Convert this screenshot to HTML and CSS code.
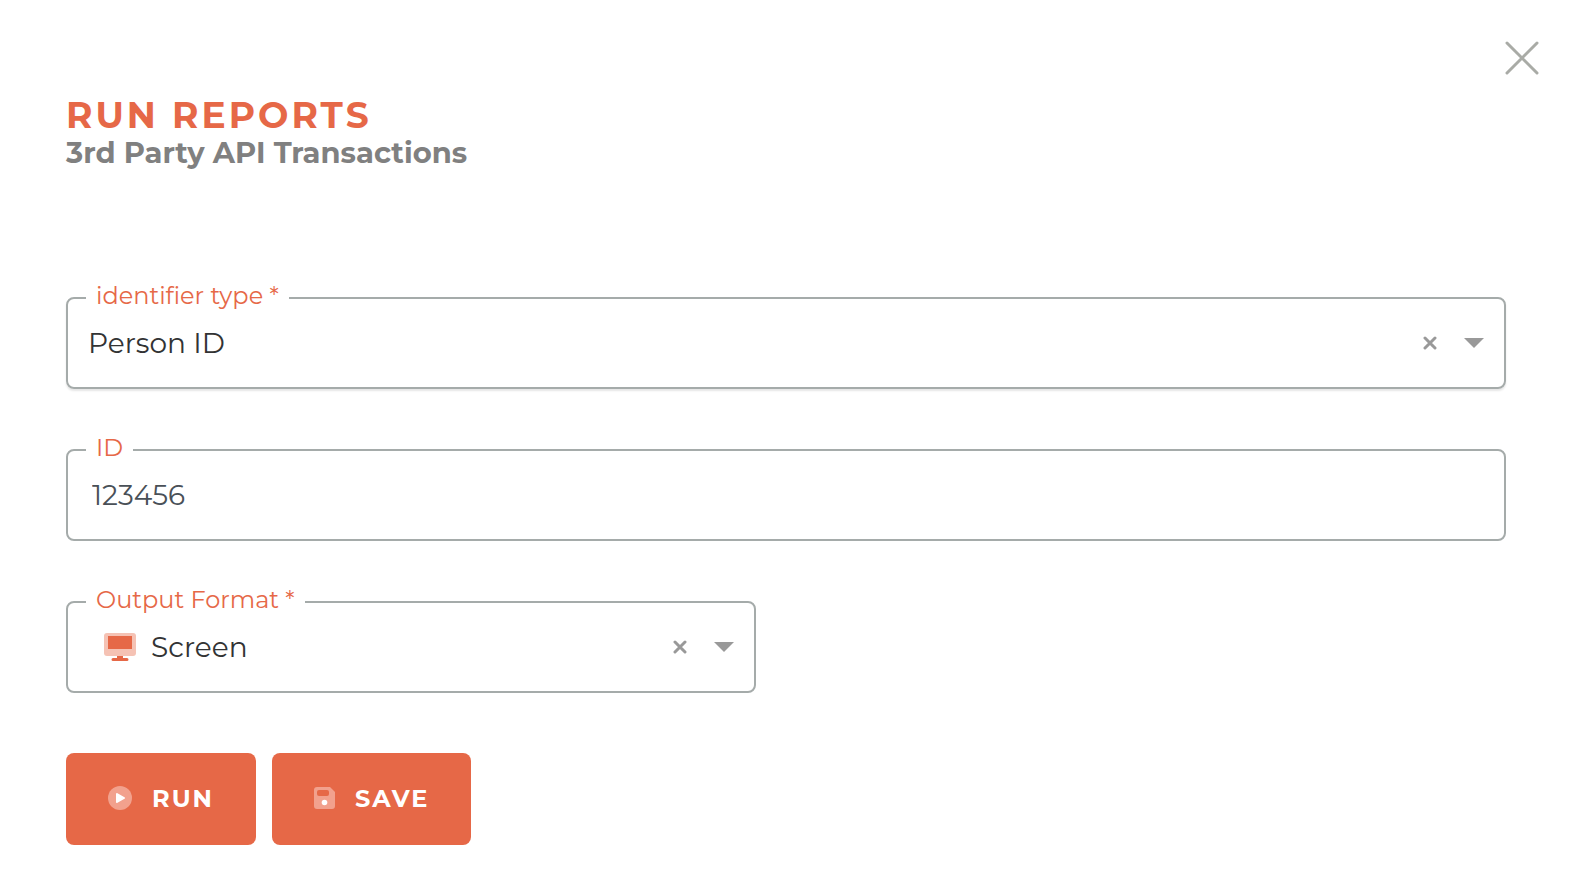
FILE: index.html
```html
<!DOCTYPE html>
<html lang="en">
<head>
  <meta charset="UTF-8" />
  <meta name="viewport" content="width=device-width, initial-scale=1" />
  <title>Run Reports - 3rd Party API Transactions</title>
  <link rel="stylesheet" href="styles.css">
</head>
<body>

  <div class="top-bar">
    <button type="button" class="close-btn" aria-label="Close">
      <svg width="36" height="36" viewBox="0 0 36 36"><path d="M3 3L33 33M33 3L3 33" /></svg>
    </button>
  </div>

  <main class="container">
    <header class="page-header">
      <h1>RUN REPORTS</h1>
      <h2>3rd Party API Transactions</h2>
    </header>

    <form id="reportForm">
      <div class="field field-raised">
        <label for="identifierType">identifier type *</label>
        <select id="identifierType" required>
          <option value="person" selected>Person ID</option>
        </select>
        <div class="field-tools">
          <button type="button" class="clear-btn" aria-label="Clear identifier type">
            <svg width="14" height="14" viewBox="0 0 14 14"><path d="M2 2L12 12M12 2L2 12" /></svg>
          </button>
          <svg class="arrow" width="20" height="10" viewBox="0 0 20 10"><path d="M0 0H20L10 10Z" /></svg>
        </div>
      </div>

      <div class="field">
        <label for="personId">ID</label>
        <input type="text" id="personId" value="123456">
      </div>

      <div class="field field-half">
        <label for="outputFormat">Output Format *</label>
        <svg class="screen-icon" width="32" height="30" viewBox="0 0 32 30">
          <rect x="0" y="1" width="32" height="23" rx="3" fill="#f5c2b4" />
          <rect x="4" y="4" width="24" height="13" fill="#e66847" />
          <path d="M13 24H19V26H23A1.500 1.500 0 0 1 23 29H9A1.500 1.500 0 0 1 9 26H13Z" fill="#e66847" />
        </svg>
        <select id="outputFormat" class="with-icon" required>
          <option value="screen" selected>Screen</option>
        </select>
        <div class="field-tools">
          <button type="button" class="clear-btn" aria-label="Clear output format">
            <svg width="14" height="14" viewBox="0 0 14 14"><path d="M2 2L12 12M12 2L2 12" /></svg>
          </button>
          <svg class="arrow" width="20" height="10" viewBox="0 0 20 10"><path d="M0 0H20L10 10Z" /></svg>
        </div>
      </div>

      <div class="actions">
        <button type="submit" class="btn">
          <svg width="24" height="24" viewBox="0 0 24 24">
            <circle cx="12" cy="12" r="12" fill="#f2a18d" />
            <path d="M9 8L16 12L9 16Z" fill="#fff" stroke="#fff" stroke-width="2" stroke-linejoin="round" />
          </svg>
          <span>RUN</span>
        </button>
        <button type="button" class="btn">
          <svg width="21" height="22" viewBox="0 0 21 22">
            <path d="M3 0H16L21 5V19A3 3 0 0 1 18 22H3A3 3 0 0 1 0 19V3A3 3 0 0 1 3 0Z" fill="#f2a18d" />
            <rect x="3" y="3" width="12" height="6" rx="2" fill="#e66847" />
            <circle cx="10.500" cy="15.500" r="2.800" fill="#fff" />
          </svg>
          <span>SAVE</span>
        </button>
      </div>
    </form>
  </main>

</body>
</html>
```
FILE: styles.css
```css
* {
  box-sizing: border-box;
}

body {
  margin: 0;
  background: #fff;
  font-family: Montserrat, Inter, sans-serif;
}

svg {
  display: block;
}

button {
  font-family: inherit;
  border: none;
  cursor: pointer;
}

.top-bar {
  display: flex;
  justify-content: flex-end;
  padding: 40px 42px 0;
}

.close-btn {
  padding: 0;
  background: none;
}

.close-btn path {
  stroke: #a9aba6;
  stroke-width: 3;
  stroke-linecap: round;
}

.container {
  padding: 19px 76px 48px 66px;
}

.page-header {
  margin-bottom: 126px;
}

h1 {
  margin: 0;
  font-size: 36px;
  line-height: 40px;
  letter-spacing: 3px;
  color: #e66847;
}

h2 {
  margin: 0;
  font-size: 29px;
  line-height: 36px;
  color: #808080;
}

form {
  display: flex;
  flex-direction: column;
  gap: 60px;
}

.field {
  position: relative;
  display: flex;
  align-items: center;
  height: 92px;
  border: 2px solid #a5abaa;
  border-radius: 8px;
}

.field-raised {
  box-shadow: 0 2px 2px rgba(0, 0, 0, 0.1);
}

.field-half {
  width: calc(50% - 30px);
}

/* label sits over the top border */
.field label {
  position: absolute;
  top: -18px;
  left: 18px;
  padding: 0 10px;
  background: #fff;
  font-size: 24px;
  line-height: 30px;
  color: #e66847;
}

.field input,
.field select {
  width: 100%;
  height: 100%;
  padding: 0 120px 0 20px;
  border: none;
  outline: none;
  background: none;
  appearance: none;
  font-family: inherit;
  font-size: 28px;
  color: #323334;
}

.field input {
  padding: 0 24px;
  color: #495057;
}

.field select.with-icon {
  padding-left: 83px;
}

.screen-icon {
  position: absolute;
  left: 36px;
}

.field-tools {
  position: absolute;
  right: 20px;
  display: flex;
  align-items: center;
  gap: 27px;
}

.clear-btn {
  padding: 0;
  background: none;
}

.clear-btn path {
  stroke: #999;
  stroke-width: 3;
  stroke-linecap: round;
}

.arrow {
  fill: #999;
  pointer-events: none;
}

.actions {
  display: flex;
  gap: 16px;
}

.btn {
  display: flex;
  align-items: center;
  gap: 20px;
  height: 92px;
  padding: 0 42px 2px;
  border-radius: 8px;
  background: #e66847;
  color: #fff;
  font-size: 24px;
  font-weight: 700;
  letter-spacing: 2px;
}
```
